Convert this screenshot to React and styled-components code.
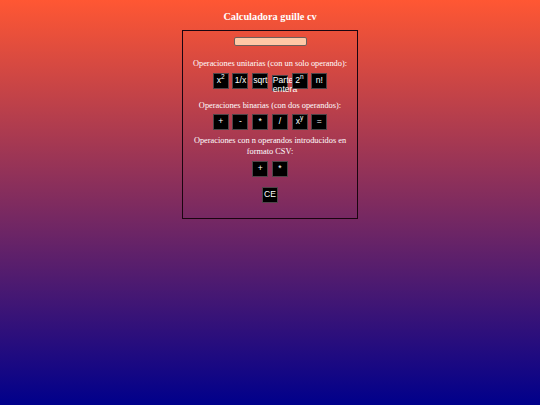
import React, { useState } from 'react';
import styled, { createGlobalStyle } from 'styled-components';

const GlobalStyle = createGlobalStyle`
  html, body {
    margin: 0;
    padding: 0;
    height: 100%;
  }
  body {
    background: linear-gradient(to bottom, #ff5733, #00008b);
    background-attachment: fixed;
    font-family: "Liberation Serif", "Times New Roman", serif;
    color: #fff;
  }
`;

const Page = styled.div`
  min-height: 100vh;
  padding-top: 11px;
  box-sizing: border-box;
  display: flex;
  flex-direction: column;
  align-items: center;
`;

const Title = styled.h1`
  margin: 0 0 7px;
  font-size: 10.3px;
  line-height: 12px;
  font-weight: bold;
  color: #fff;
`;

const Calculator = styled.div`
  width: 176px;
  box-sizing: border-box;
  border: 1px solid #1a0510;
  padding: 6px 4px 15px;
  display: flex;
  flex-direction: column;
  align-items: center;
`;

const Display = styled.input`
  width: 73px;
  height: 9px;
  min-height: 9px;
  box-sizing: border-box;
  padding: 0 2px;
  margin: 0;
  border: 1px solid #6e5e5a;
  border-radius: 2px;
  background: #ffc8a6;
  font-size: 6px;
  line-height: 7px;
  outline: none;
`;

const Label = styled.p`
  margin: ${(p) => p.$top}px 0 0;
  font-size: 8.35px;
  line-height: ${(p) => (p.$wrap ? '10.5px' : '10px')};
  text-align: center;
  color: #fff;
`;

const Row = styled.div`
  display: flex;
  align-items: baseline;
  justify-content: center;
  gap: 3.7px;
  margin-top: ${(p) => p.$top}px;
`;

const Key = styled.button`
  width: 16px;
  height: 16px;
  padding: 0;
  box-sizing: border-box;
  background: #000;
  border: 1px solid #4e4448;
  border-radius: 0;
  color: #fff;
  font-family: "Liberation Sans", Arial, sans-serif;
  font-size: 8.6px;
  line-height: 9.6px;
  cursor: pointer;
  overflow: visible;

  sup {
    font-size: 6.5px;
    line-height: 0;
  }
`;

const unary = [
  { id: 'sq', label: <>x<sup>2</sup></> },
  { id: 'inv', label: '1/x' },
  { id: 'sqrt', label: 'sqrt' },
  { id: 'int', label: 'Parte entera' },
  { id: 'pow2', label: <>2<sup>n</sup></> },
  { id: 'fact', label: 'n!' },
];

const binary = [
  { id: 'add', label: '+' },
  { id: 'sub', label: '-' },
  { id: 'mul', label: '*' },
  { id: 'div', label: '/' },
  { id: 'pow', label: <>x<sup>y</sup></> },
  { id: 'eq', label: '=' },
];

const csv = [
  { id: 'sum', label: '+' },
  { id: 'prod', label: '*' },
];

const App = () => {
  const [value, setValue] = useState('');

  return (
    <>
      <GlobalStyle />
      <Page>
        <Title>Calculadora guille cv</Title>
        <Calculator>
          <Display value={value} onChange={(e) => setValue(e.target.value)} />

          <Label $top={12.5}>Operaciones unitarias (con un solo operando):</Label>
          <Row $top={4}>
            {unary.map((k) => <Key key={k.id}>{k.label}</Key>)}
          </Row>

          <Label $top={10}>Operaciones binarias (con dos operandos):</Label>
          <Row $top={3}>
            {binary.map((k) => <Key key={k.id}>{k.label}</Key>)}
          </Row>

          <Label $top={6.5} $wrap>Operaciones con n operandos introducidos en formato CSV:</Label>
          <Row $top={4}>
            {csv.map((k) => <Key key={k.id}>{k.label}</Key>)}
          </Row>

          <Row $top={9.5}>
            <Key onClick={() => setValue('')}>CE</Key>
          </Row>
        </Calculator>
      </Page>
    </>
  );
};

export default App;
